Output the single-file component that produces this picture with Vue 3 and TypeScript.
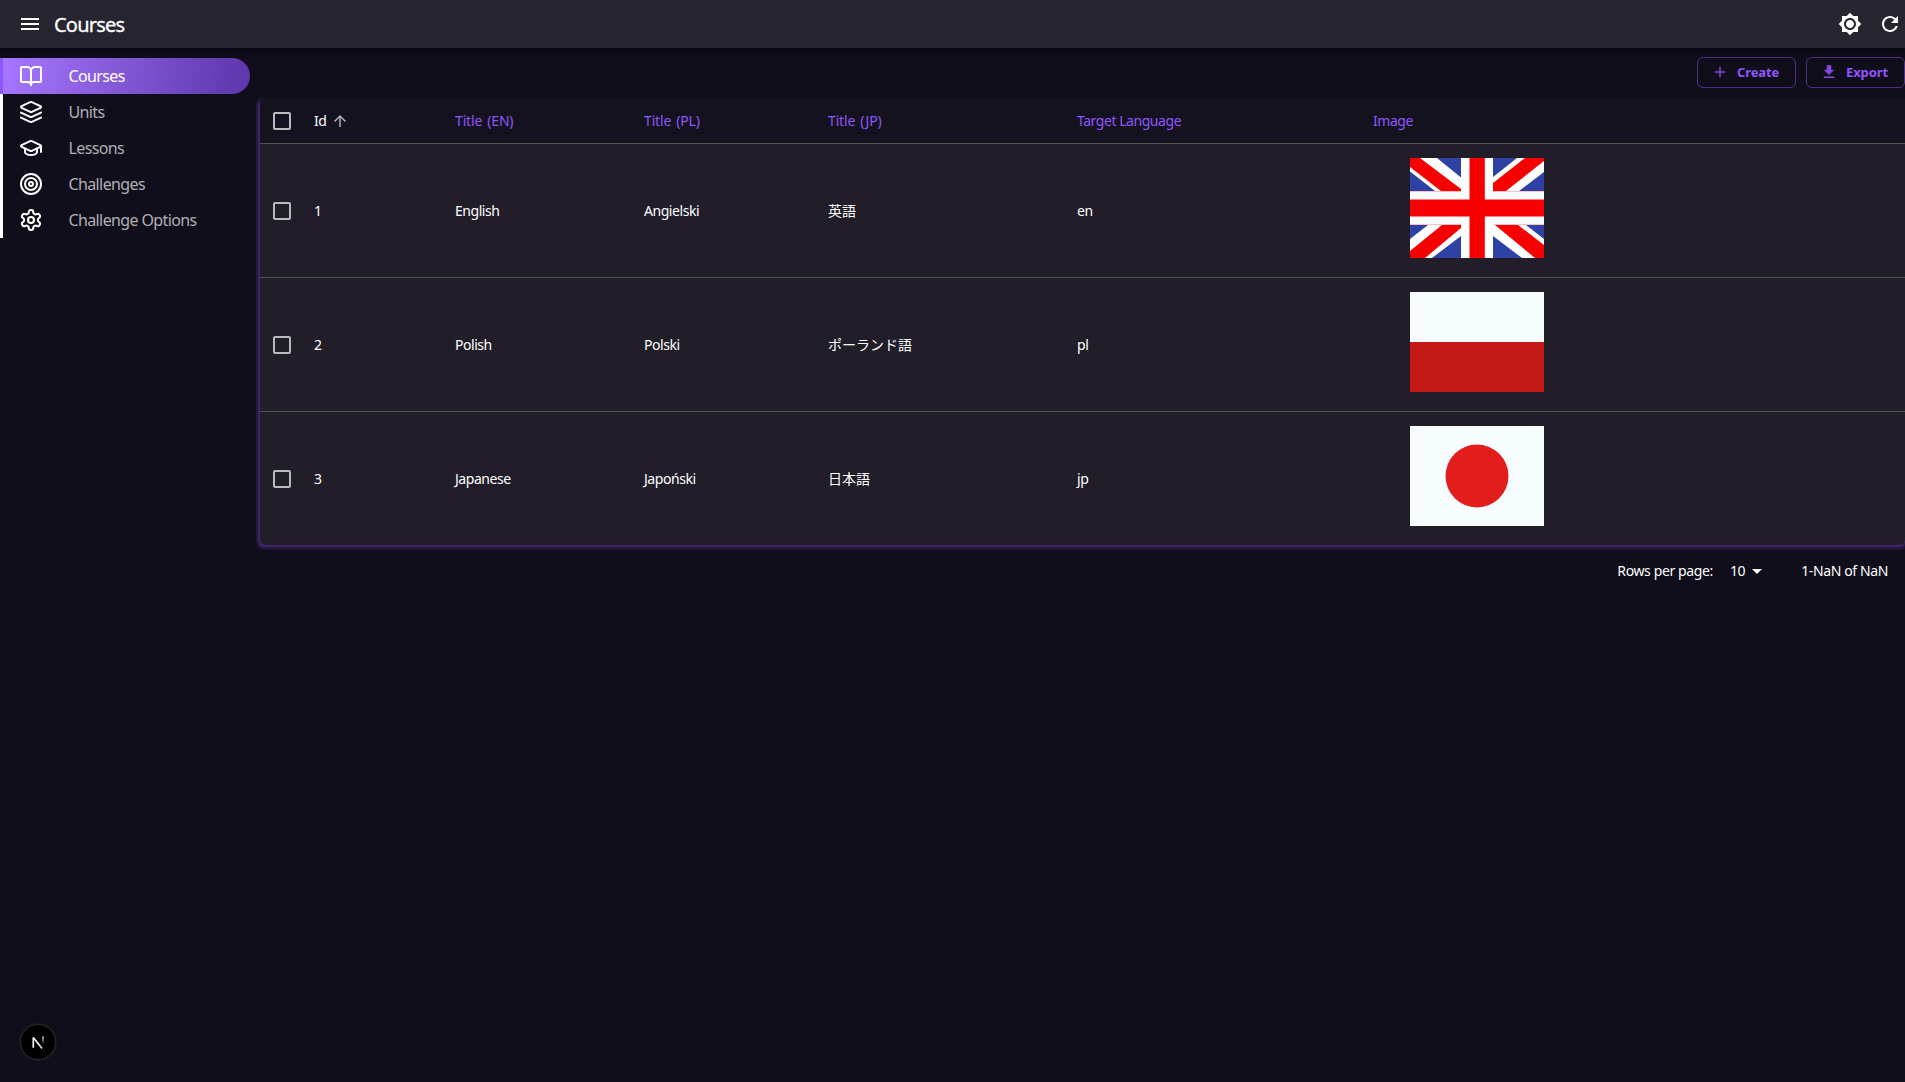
<script setup lang="ts">
interface NavItem {
  label: string
  icon: string
  active?: boolean
}

interface Course {
  id: number
  en: string
  pl: string
  jp: string
  lang: string
}

const nav: NavItem[] = [
  { label: 'Courses', icon: 'book', active: true },
  { label: 'Units', icon: 'layers' },
  { label: 'Lessons', icon: 'cap' },
  { label: 'Challenges', icon: 'target' },
  { label: 'Challenge Options', icon: 'gear' },
]

const headers = ['Title (EN)', 'Title (PL)', 'Title (JP)', 'Target Language', 'Image']

const courses: Course[] = [
  { id: 1, en: 'English', pl: 'Angielski', jp: '英語', lang: 'en' },
  { id: 2, en: 'Polish', pl: 'Polski', jp: 'ポーランド語', lang: 'pl' },
  { id: 3, en: 'Japanese', pl: 'Japoński', jp: '日本語', lang: 'jp' },
]
</script>

<template>
  <div class="page">
    <header class="appbar">
      <svg class="menu" viewBox="0 0 24 24"><path d="M3 18h18v-2H3v2zm0-5h18v-2H3v2zm0-7v2h18V6H3z" /></svg>
      <h1>Courses</h1>
      <svg class="theme" viewBox="0 0 24 24"><path d="M20 8.69V4h-4.69L12 .69 8.69 4H4v4.69L.69 12 4 15.31V20h4.69L12 23.31 15.31 20H20v-4.69L23.31 12 20 8.69zM12 18c-3.31 0-6-2.69-6-6s2.69-6 6-6 6 2.69 6 6-2.69 6-6 6zm0-10c-2.21 0-4 1.79-4 4s1.79 4 4 4 4-1.79 4-4-1.79-4-4-4z" /></svg>
      <svg class="refresh" viewBox="0 0 24 24"><path d="M17.65 6.35C16.2 4.9 14.21 4 12 4c-4.42 0-7.99 3.58-7.99 8s3.57 8 7.99 8c3.73 0 6.84-2.55 7.73-6h-2.08c-.82 2.33-3.04 4-5.65 4-3.31 0-6-2.69-6-6s2.69-6 6-6c1.66 0 3.14.69 4.22 1.78L13 11h7V4l-2.35 2.35z" /></svg>
    </header>

    <div class="body">
      <nav class="sidebar">
        <a v-for="item in nav" :key="item.label" class="item" :class="{ active: item.active }">
          <svg viewBox="0 0 24 24">
            <template v-if="item.icon === 'book'">
              <path d="M12 7v14" />
              <path d="M3 18a1 1 0 0 1-1-1V4a1 1 0 0 1 1-1h5a4 4 0 0 1 4 4 4 4 0 0 1 4-4h5a1 1 0 0 1 1 1v13a1 1 0 0 1-1 1h-6a3 3 0 0 0-3 3 3 3 0 0 0-3-3z" />
            </template>
            <template v-else-if="item.icon === 'layers'">
              <path d="m12.83 2.18a2 2 0 0 0-1.66 0L2.6 6.08a1 1 0 0 0 0 1.83l8.58 3.91a2 2 0 0 0 1.66 0l8.58-3.9a1 1 0 0 0 0-1.83Z" />
              <path d="m22 17.65-9.17 4.16a2 2 0 0 1-1.66 0L2 17.65" />
              <path d="m22 12.65-9.17 4.16a2 2 0 0 1-1.66 0L2 12.65" />
            </template>
            <template v-else-if="item.icon === 'cap'">
              <path d="M21.42 10.922a1 1 0 0 0-.019-1.838L12.83 5.18a2 2 0 0 0-1.66 0L2.6 9.08a1 1 0 0 0 0 1.832l8.57 3.908a2 2 0 0 0 1.66 0z" />
              <path d="M22 10v6" />
              <path d="M6 12.5V16a6 3 0 0 0 12 0v-3.5" />
            </template>
            <template v-else-if="item.icon === 'target'">
              <circle cx="12" cy="12" r="10" />
              <circle cx="12" cy="12" r="6" />
              <circle cx="12" cy="12" r="2" />
            </template>
            <template v-else>
              <path d="M12.22 2h-.44a2 2 0 0 0-2 2v.18a2 2 0 0 1-1 1.73l-.43.25a2 2 0 0 1-2 0l-.15-.08a2 2 0 0 0-2.73.73l-.22.38a2 2 0 0 0 .73 2.73l.15.1a2 2 0 0 1 1 1.72v.51a2 2 0 0 1-1 1.74l-.15.09a2 2 0 0 0-.73 2.73l.22.38a2 2 0 0 0 2.73.73l.15-.08a2 2 0 0 1 2 0l.43.25a2 2 0 0 1 1 1.73V20a2 2 0 0 0 2 2h.44a2 2 0 0 0 2-2v-.18a2 2 0 0 1 1-1.73l.43-.25a2 2 0 0 1 2 0l.15.08a2 2 0 0 0 2.73-.73l.22-.39a2 2 0 0 0-.73-2.73l-.15-.08a2 2 0 0 1-1-1.74v-.5a2 2 0 0 1 1-1.74l.15-.09a2 2 0 0 0 .73-2.73l-.22-.38a2 2 0 0 0-2.73-.73l-.15.08a2 2 0 0 1-2 0l-.43-.25a2 2 0 0 1-1-1.73V4a2 2 0 0 0-2-2z" />
              <circle cx="12" cy="12" r="3" />
            </template>
          </svg>
          <span>{{ item.label }}</span>
        </a>
      </nav>

      <main>
        <div class="toolbar">
          <button>
            <svg viewBox="0 0 24 24"><path d="M19 13h-6v6h-2v-6H5v-2h6V5h2v6h6v2z" /></svg>
            <span>Create</span>
          </button>
          <button>
            <svg viewBox="0 0 24 24"><path d="M19 9h-4V3H9v6H5l7 7 7-7zM5 18v2h14v-2H5z" /></svg>
            <span>Export</span>
          </button>
        </div>

        <section class="card">
          <div class="row head">
            <i class="check"></i>
            <span class="sorted">
              Id
              <svg viewBox="0 0 24 24"><path d="M4 12l1.41 1.41L11 7.83V20h2V7.83l5.58 5.59L20 12l-8-8-8 8z" /></svg>
            </span>
            <span v-for="h in headers" :key="h" :class="{ wide: h.startsWith('Title') }">{{ h }}</span>
          </div>
          <div v-for="c in courses" :key="c.id" class="row">
            <i class="check"></i>
            <span>{{ c.id }}</span>
            <span>{{ c.en }}</span>
            <span>{{ c.pl }}</span>
            <span class="jp">{{ c.jp }}</span>
            <span>{{ c.lang }}</span>
            <div class="image">
              <svg v-if="c.lang === 'en'" class="flag" viewBox="0 0 134 100">
                <path fill="#2e42a5" d="M0 0h134v100H0z" />
                <path fill="#fff" d="M0 0H27L51 19.5V33H25L0 13.5zM134 0H107L83 19V33H109L134 14zM0 100H22L51 78V67H18L0 81zM134 100H112L83 78V67H116L134 81z" />
                <path fill="#f70000" d="M0 0H10L51 31V33H31L0 9zM134 0H115L83 25V33H96L134 3zM0 100H15L51 70V67H32L0 93zM134 100H125L85 67H108L134 87z" />
                <path fill="#fff" d="M51 0h32v100H51zM0 33h134v34H0z" />
                <path fill="#fbc0c4" d="M0 33h51v1H0zM83 33h51v1H83zM0 66h51v1H0zM83 66h51v1H83z" />
                <path fill="#f70000" d="M59.5 0h15.3v100H59.5zM0 41.5h134v17H0z" />
              </svg>
              <svg v-else-if="c.lang === 'pl'" class="flag" viewBox="0 0 134 100">
                <path fill="#f7fcff" d="M0 0h134v50H0z" />
                <path fill="#c51918" d="M0 50h134v50H0z" />
              </svg>
              <svg v-else class="flag" viewBox="0 0 134 100">
                <path fill="#f7fcff" d="M0 0h134v100H0z" />
                <circle cx="67" cy="50" r="31.5" fill="#e31d1c" />
              </svg>
            </div>
          </div>
        </section>

        <footer class="pager">
          <span class="label">Rows per page:</span>
          <span class="size">10</span>
          <svg viewBox="0 0 24 24"><path d="M7 10l5 5 5-5z" /></svg>
          <span class="range">1-NaN of NaN</span>
        </footer>
      </main>
    </div>

    <div class="badge">
      <svg viewBox="0 0 36 36" fill="none">
        <defs>
          <linearGradient id="diag" x1="20" y1="19" x2="26" y2="26" gradientUnits="userSpaceOnUse">
            <stop stop-color="#fff" /><stop offset="0.6" stop-color="#fff" stop-opacity="0.8" /><stop offset="1" stop-color="#fff" stop-opacity="0" />
          </linearGradient>
          <linearGradient id="stem" x1="0" y1="12" x2="0" y2="21" gradientUnits="userSpaceOnUse">
            <stop stop-color="#fff" /><stop offset="1" stop-color="#fff" stop-opacity="0" />
          </linearGradient>
        </defs>
        <path d="M13 24.2V13.2L22.3 24.8" stroke="url(#diag)" stroke-width="1.7" stroke-linejoin="bevel" />
        <path d="M22.6 12.2h1.5v9h-1.5z" fill="url(#stem)" />
      </svg>
    </div>
  </div>
</template>

<style>
body {
  margin: 0;
  background: #110e1b;
  overflow: hidden;
}
</style>

<style scoped>
.page {
  height: 1082px;
  background: #110e1b;
  color: #fff;
  font: 14px 'Noto Sans', 'Noto Sans CJK JP', sans-serif;
  overflow: hidden;
}

.appbar {
  display: flex;
  align-items: center;
  box-sizing: border-box;
  height: 48px;
  padding: 0 3px 0 18px;
  background: #272530;
  box-shadow: 0 2px 4px -1px rgba(0, 0, 0, 0.2), 0 4px 5px rgba(0, 0, 0, 0.14), 0 1px 10px rgba(0, 0, 0, 0.12);
  position: relative;
}

.appbar svg {
  width: 24px;
  height: 24px;
  fill: #fff;
}

.appbar h1 {
  flex: 1;
  margin: 1px 0 0 12px;
  font-size: 20px;
  font-weight: 400;
  letter-spacing: -0.8px;
  -webkit-text-stroke: 0.3px #fff;
}

.appbar .theme {
  margin-right: 16px;
}

.body {
  display: flex;
}

.sidebar {
  width: 250px;
  flex: none;
  padding-top: 10px;
}

.item {
  display: flex;
  align-items: center;
  box-sizing: border-box;
  height: 36px;
  padding-left: 16px;
  border-left: 3px solid #fff;
  font-size: 16px;
  letter-spacing: -0.62px;
  color: #b0afb4;
}

.item svg {
  width: 24px;
  height: 24px;
  margin-right: 25.5px;
  fill: none;
  stroke: #fff;
  stroke-width: 2;
  stroke-linecap: round;
  stroke-linejoin: round;
}

.item.active {
  border-left-color: #9055ff;
  border-radius: 0 18px 18px 0;
  background: linear-gradient(98deg, #a677ff, #6039b0 94%);
  background-origin: padding-box;
  color: #fff;
}

main {
  flex: 1;
  min-width: 0;
  padding-left: 10px;
}

.toolbar {
  display: flex;
  justify-content: flex-end;
  gap: 10px;
  padding: 9px 0 10px;
}

.toolbar button {
  display: flex;
  align-items: center;
  box-sizing: border-box;
  width: 99px;
  height: 31px;
  padding: 0 0 1px 13px;
  border: 1px solid #4e2f87;
  border-radius: 6px;
  background: none;
  color: #9055fd;
  font: 700 13px 'Noto Sans', sans-serif;
  letter-spacing: -0.1px;
}

.toolbar svg {
  width: 18px;
  height: 18px;
  margin-right: 8px;
  fill: #8049e0;
}

.card {
  border-radius: 6px;
  background: #211e2a;
  box-shadow: 0 2px 0 0 #3e2568, -2px 2px 0 0 #3e2568, 0 2px 0 2px #26183f, -2px 2px 0 2px #26183f, 0 2px 0 4px #181226;
  clip-path: inset(0 0 -8px -8px);
}

.row {
  display: grid;
  grid-template-columns: 54px 141px 189px 184px 249px 296px 1fr;
  align-items: center;
  box-sizing: border-box;
  height: 134px;
  border-bottom: 1px solid #515151;
  letter-spacing: -0.45px;
}

.row:last-child {
  height: 133px;
  border-bottom: 0;
}

.row.head {
  height: 46px;
  border-radius: 6px 0 0 0;
  background: #15121f;
  color: #9055fd;
}

.row .wide {
  letter-spacing: -0.15px;
  word-spacing: 1.5px;
}

.check {
  box-sizing: border-box;
  width: 18px;
  height: 18px;
  margin-left: 13px;
  border: 2px solid #bab9bd;
  border-radius: 2px;
}

.sorted {
  display: flex;
  align-items: center;
  color: #fff;
}

.sorted svg {
  width: 18px;
  height: 18px;
  margin-left: 5px;
  fill: #b3b2b6;
}

.jp {
  padding-bottom: 2px;
  letter-spacing: 0;
}

.image {
  align-self: start;
  padding: 14px 0 0 37px;
}

.flag {
  display: block;
  width: 134px;
  height: 100px;
}

.pager {
  display: flex;
  align-items: center;
  justify-content: flex-end;
  height: 51px;
  padding-right: 17px;
  letter-spacing: -0.38px;
}

.pager .size {
  margin-left: 17px;
}

.pager svg {
  width: 24px;
  height: 24px;
  fill: #fff;
}

.pager .range {
  margin-left: 32px;
}

.badge {
  position: absolute;
  left: 20px;
  top: 1024px;
  box-sizing: border-box;
  width: 36px;
  height: 36px;
  border: 1px solid #2b2a2e;
  border-radius: 50%;
  background: #000;
  box-shadow: 0 0 0 1px #19181d;
}

.badge svg {
  display: block;
  width: 34px;
  height: 34px;
}
</style>
